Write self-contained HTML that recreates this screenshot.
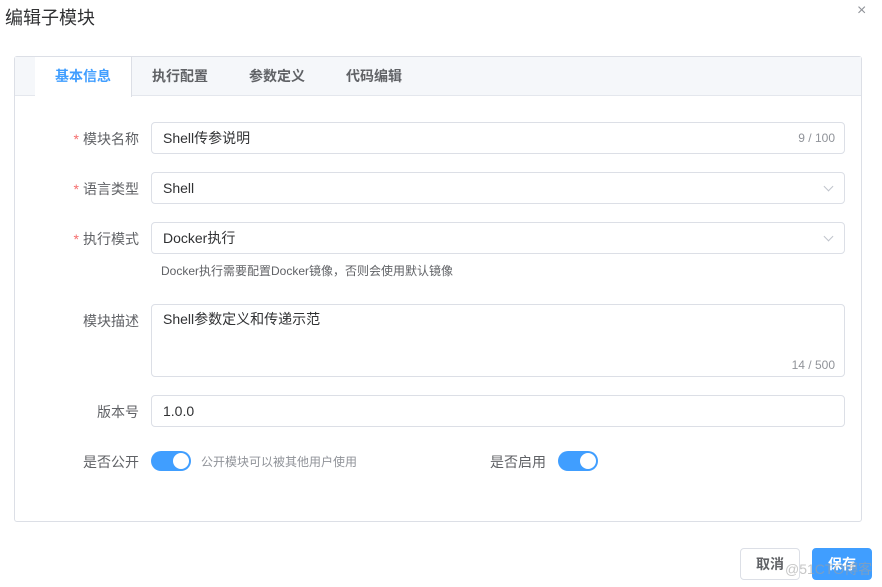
<!DOCTYPE html>
<html><head><meta charset="utf-8"><style>
*{box-sizing:border-box;margin:0;padding:0}
body{width:882px;height:587px;background:#fff;font-family:"Liberation Sans","Noto Sans CJK SC",sans-serif;color:#303133;position:relative;overflow:hidden;font-size:14px}
.a{position:absolute}
.title{left:5px;top:4px;font-size:18px;color:#303133}
.close{left:857px;top:2px;font-size:16px;color:#909399}
.card{left:14px;top:56px;width:848px;height:466px;border:1px solid #dcdfe6;border-radius:3px}
.tabs{left:0;top:0;width:846px;height:39px;background:#f5f7fa;border-bottom:1px solid #e4e7ed}
.tab{top:0;height:39px;line-height:39px;font-size:14px;font-weight:bold;color:#606266}
.tab.on{background:#fff;color:#409eff;border-right:1px solid #dcdfe6;height:40px;left:20px;width:97px;text-align:center}
.lbl{font-size:14px;color:#606266;text-align:right;width:120px;left:4px}
.lbl i{color:#f56c6c;font-style:normal;margin-right:4px}
.inp{left:136px;width:694px;height:32px;border:1px solid #dcdfe6;border-radius:4px;padding-left:11px;line-height:30px;font-size:14px;color:#303133}
.cnt{position:absolute;right:9px;top:0;font-size:12px;color:#909399}
.arr{position:absolute;right:12px;top:10px;width:7px;height:7px;border-right:1px solid #c0c4cc;border-bottom:1px solid #c0c4cc;transform:rotate(45deg)}
.sw{width:40px;height:20px;border-radius:10px;background:#409eff}
.sw::after{content:"";position:absolute;right:2px;top:2px;width:16px;height:16px;border-radius:50%;background:#fff}
.btn{top:548px;height:32px;width:60px;border-radius:4px;text-align:center;line-height:30px;font-size:14px;font-weight:bold}
</style></head><body>
<div class="a title">编辑子模块</div>
<div class="a close">×</div>
<div class="a card">
 <div class="a tabs">
  <div class="a tab on">基本信息</div>
  <div class="a tab" style="left:137px">执行配置</div>
  <div class="a tab" style="left:234px">参数定义</div>
  <div class="a tab" style="left:331px">代码编辑</div>
 </div>
 <div class="a lbl" style="top:72px"><i>*</i>模块名称</div>
 <div class="a inp" style="top:65px">Shell传参说明<span class="cnt">9 / 100</span></div>
 <div class="a lbl" style="top:122px"><i>*</i>语言类型</div>
 <div class="a inp" style="top:115px">Shell<span class="arr"></span></div>
 <div class="a lbl" style="top:172px"><i>*</i>执行模式</div>
 <div class="a inp" style="top:165px">Docker执行<span class="arr"></span></div>
 <div class="a" style="left:146px;top:205px;font-size:12px;color:#606266">Docker执行需要配置Docker镜像，否则会使用默认镜像</div>
 <div class="a lbl" style="top:254px">模块描述</div>
 <div class="a inp" style="top:247px;height:73px;line-height:28px">Shell参数定义和传递示范<span class="cnt" style="top:auto;bottom:2px;right:9px;line-height:18px">14 / 500</span></div>
 <div class="a lbl" style="top:345px">版本号</div>
 <div class="a inp" style="top:338px">1.0.0</div>
 <div class="a lbl" style="top:395px">是否公开</div>
 <div class="a sw" style="left:136px;top:394px"></div>
 <div class="a" style="left:186px;top:396px;font-size:12px;color:#909399">公开模块可以被其他用户使用</div>
 <div class="a" style="left:475px;top:395px;color:#606266">是否启用</div>
 <div class="a sw" style="left:543px;top:394px"></div>
</div>
<div class="a btn" style="left:740px;border:1px solid #dcdfe6;color:#606266">取消</div>
<div class="a btn" style="left:812px;background:#409eff;color:#fff;border:1px solid #409eff">保存</div>
<div class="a" style="left:785px;top:559px;font-size:14px;color:rgba(160,160,160,.6)">@51CTO博客</div>
</body></html>
